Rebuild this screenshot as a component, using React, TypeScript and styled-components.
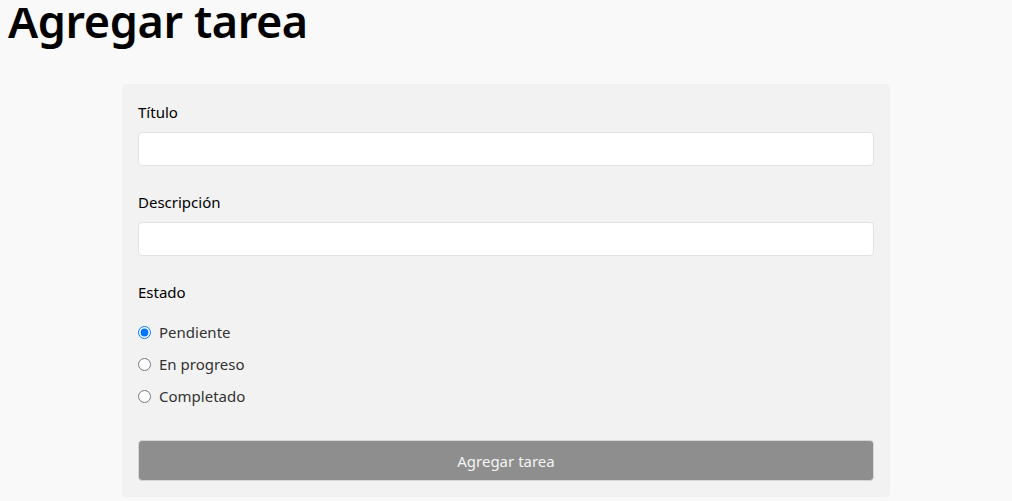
import React, { useState } from 'react';
import styled, { createGlobalStyle } from 'styled-components';

const GlobalStyle = createGlobalStyle`
  body {
    margin: 8px;
    background-color: #f9f9f9;
    font-family: 'Segoe UI', 'Noto Sans', 'Open Sans', sans-serif;
    color: #000;
  }
`;

const PageTitle = styled.h1`
  margin: 0;
  font-size: 45px;
  font-weight: 600;
  letter-spacing: -0.4px;
  line-height: 26px;
`;

const Card = styled.form`
  box-sizing: border-box;
  width: 768px;
  margin: 50px auto 0;
  padding: 16px;
  background-color: #f2f2f2;
  border-radius: 4px;
  display: flex;
  flex-direction: column;
`;

const Field = styled.div`
  display: flex;
  flex-direction: column;
  gap: 8px;
  margin-bottom: 24px;
`;

const Label = styled.label`
  font-size: 15px;
  line-height: 24px;
`;

const Input = styled.input`
  box-sizing: border-box;
  height: 34px;
  border: 1px solid #e2e2e6;
  border-radius: 4px;
  background: #fff;
  padding: 0 8px;
  font: inherit;
  outline: none;
`;

const RadioList = styled.div`
  display: flex;
  flex-direction: column;
  gap: 8px;
  margin-top: 8px;
`;

const RadioRow = styled.label`
  display: flex;
  align-items: center;
  gap: 8px;
  height: 24px;
  font-size: 15px;
  color: #333;
`;

const Radio = styled.input`
  margin: 0;
  width: 13px;
  height: 13px;
  accent-color: #0075ff;
`;

const SubmitButton = styled.button`
  height: 41px;
  margin-top: 8px;
  border: 1px solid #d6d6d6;
  border-radius: 4px;
  background-color: #8e8e8e;
  color: #f4f4f4;
  font: inherit;
  font-size: 15px;
`;

const states = ['Pendiente', 'En progreso', 'Completado'];

const App = () => {
  const [estado, setEstado] = useState('Pendiente');

  return (
    <>
      <GlobalStyle />
      <PageTitle>Agregar tarea</PageTitle>
      <Card onSubmit={(e) => e.preventDefault()}>
        <Field>
          <Label htmlFor="titulo">Título</Label>
          <Input id="titulo" type="text" />
        </Field>
        <Field>
          <Label htmlFor="descripcion">Descripción</Label>
          <Input id="descripcion" type="text" />
        </Field>
        <Field>
          <Label>Estado</Label>
          <RadioList>
            {states.map((s) => (
              <RadioRow key={s}>
                <Radio
                  type="radio"
                  name="estado"
                  checked={estado === s}
                  onChange={() => setEstado(s)}
                />
                {s}
              </RadioRow>
            ))}
          </RadioList>
        </Field>
        <SubmitButton type="submit">Agregar tarea</SubmitButton>
      </Card>
    </>
  );
};

export default App;
